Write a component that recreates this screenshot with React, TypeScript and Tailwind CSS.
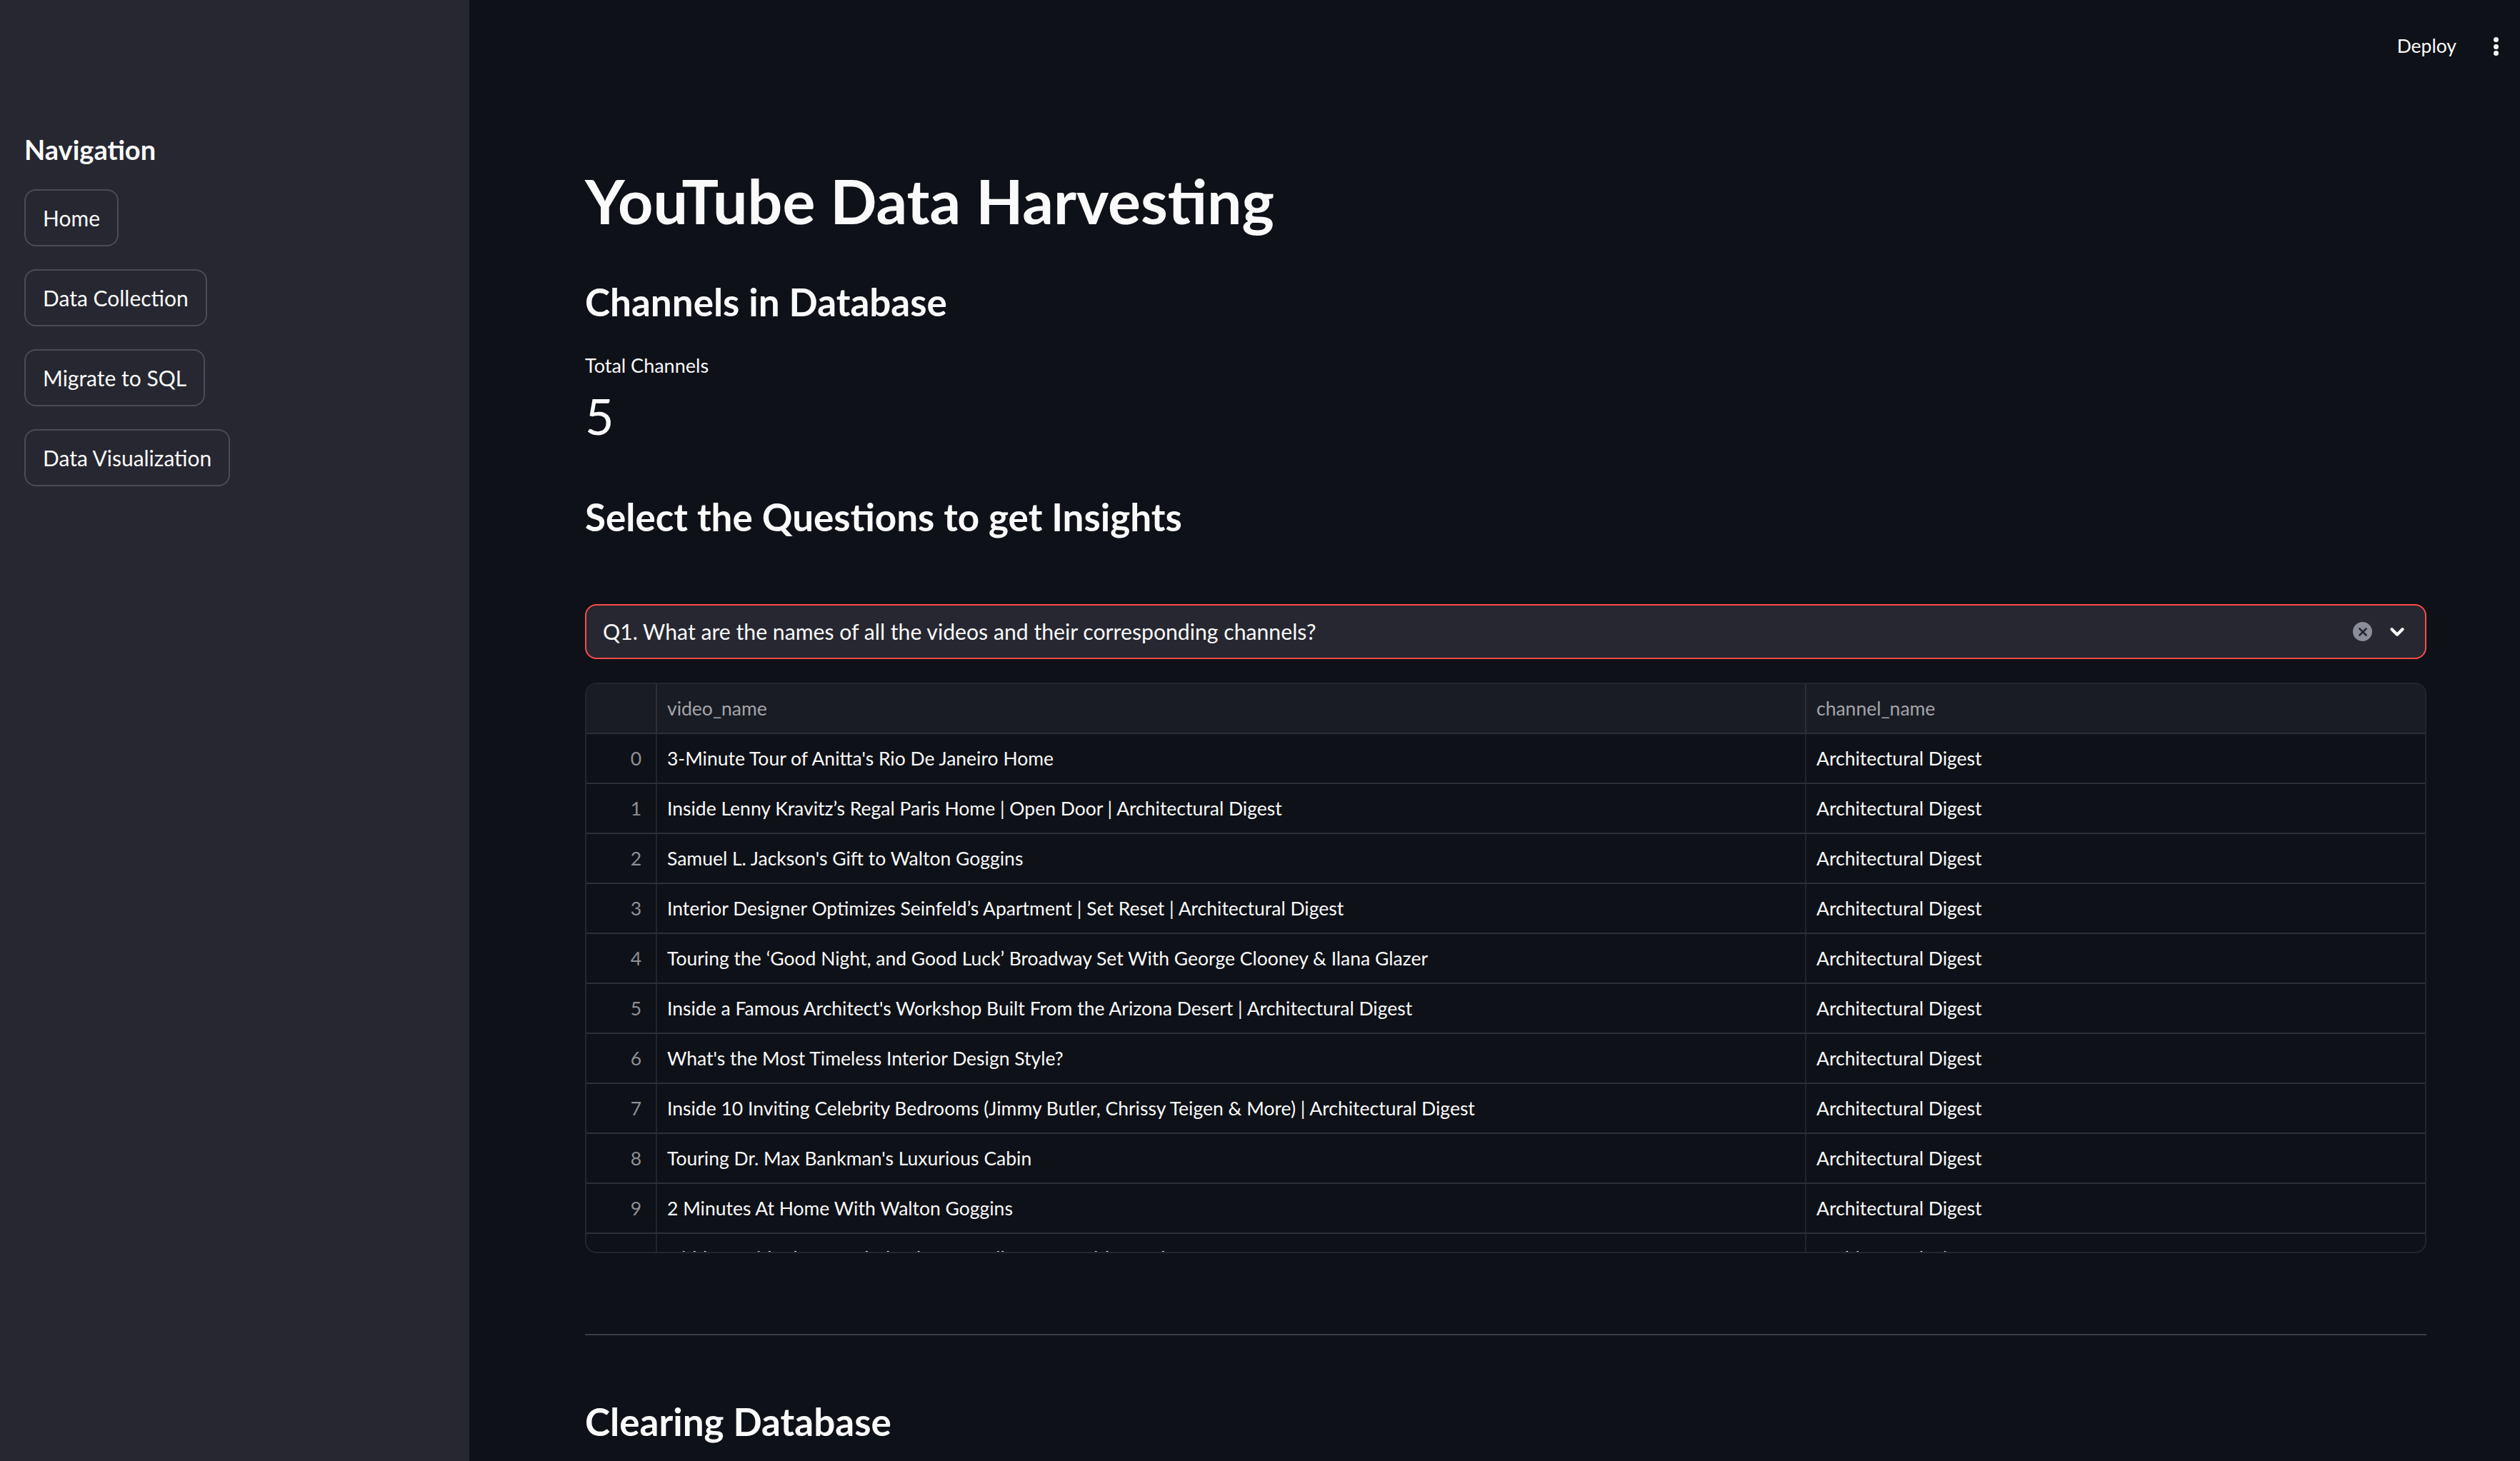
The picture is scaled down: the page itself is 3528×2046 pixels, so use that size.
import { ChevronDown, X } from "lucide-react";

const navItems = ["Home", "Data Collection", "Migrate to SQL", "Data Visualization"];

const rows = [
  "3-Minute Tour of Anitta's Rio De Janeiro Home",
  "Inside Lenny Kravitz’s Regal Paris Home | Open Door | Architectural Digest",
  "Samuel L. Jackson's Gift to Walton Goggins",
  "Interior Designer Optimizes Seinfeld’s Apartment | Set Reset | Architectural Digest",
  "Touring the ‘Good Night, and Good Luck’ Broadway Set With George Clooney & Ilana Glazer",
  "Inside a Famous Architect's Workshop Built From the Arizona Desert | Architectural Digest",
  "What's the Most Timeless Interior Design Style?",
  "Inside 10 Inviting Celebrity Bedrooms (Jimmy Butler, Chrissy Teigen & More) | Architectural Digest",
  "Touring Dr. Max Bankman's Luxurious Cabin",
  "2 Minutes At Home With Walton Goggins",
  "Hidden Inside the Wonderland of a Family Home With Jay Shetty",
];

function Sidebar() {
  return (
    <aside className="w-[657px] shrink-0 h-full bg-[#262730] px-[34px]">
      {/* Heading */}
      <div className="mt-[184px] h-[50px] leading-[50px] text-[38px] font-bold text-[#fafafa]">
        Navigation
      </div>

      {/* Nav buttons */}
      <div className="mt-[31px] flex flex-col items-start gap-[32px]">
        {navItems.map((item) => (
          <button
            key={item}
            className="h-[80px] px-[24px] rounded-[16px] border-2 border-[#4a4b54] bg-[#262730] text-[30px] text-[#fafafa] leading-none"
          >
            {item}
          </button>
        ))}
      </div>
    </aside>
  );
}

function QuestionSelect() {
  return (
    <div className="mt-[92px] h-[77px] rounded-[16px] border-2 border-[#ff4b4b] bg-[#262730] flex items-center pl-[23px] pr-[24px]">
      <span className="flex-1 text-[30.2px] text-[#fafafa] truncate">
        Q1. What are the names of all the videos and their corresponding channels?
      </span>
      <div className="flex items-center gap-[20px]">
        <span className="w-[27px] h-[27px] rounded-full bg-[#8b8d98] flex items-center justify-center">
          <X className="w-[18px] h-[18px] text-[#262730]" strokeWidth={3.5} />
        </span>
        <ChevronDown className="w-[30px] h-[30px] text-[#fafafa]" strokeWidth={3.5} />
      </div>
    </div>
  );
}

function DataTable() {
  return (
    <div className="mt-[33px] h-[799px] rounded-[16px] border-2 border-[#24262d] overflow-hidden">
      {/* Header */}
      <div className="flex h-[70px] bg-[#1a1c24] border-b-2 border-[#2c2f36] text-[26.5px] text-[#a3a5aa]">
        <div className="w-[99px] shrink-0 border-r-2 border-[#2c2f36]" />
        <div className="w-[1609px] shrink-0 border-r-2 border-[#2c2f36] flex items-center pl-[14px] pt-[2px]">video_name</div>
        <div className="flex-1 flex items-center pl-[14px] pt-[2px]">channel_name</div>
      </div>

      {/* Rows */}
      {rows.map((name, i) => (
        <div key={i} className="flex h-[70px] border-b-2 border-[#2c2f36] text-[26.5px] text-[#fafafa]">
          <div className="w-[99px] shrink-0 border-r-2 border-[#22242b] flex items-center justify-end pr-[20px] pt-[2px] text-[#8d8f94]">
            {i}
          </div>
          <div className="w-[1609px] shrink-0 border-r-2 border-[#22242b] flex items-center pl-[14px] pt-[2px] whitespace-nowrap">
            {name}
          </div>
          <div className="flex-1 flex items-center pl-[14px] pt-[2px]">Architectural Digest</div>
        </div>
      ))}
    </div>
  );
}

export default function App() {
  return (
    <div className="w-[3528px] h-[2046px] flex overflow-hidden bg-[#0e1117] font-[Lato,sans-serif]">
      <Sidebar />

      <main className="flex-1 h-full flex flex-col">
        {/* Toolbar */}
        <div className="h-[130px] shrink-0 flex items-center justify-end pr-[30px] gap-[52px]">
          <span className="text-[26.5px] text-[#fafafa]">Deploy</span>
          <div className="flex flex-col gap-[2.5px]">
            <span className="w-[7px] h-[7px] rounded-full bg-[#fafafa]" />
            <span className="w-[7px] h-[7px] rounded-full bg-[#fafafa]" />
            <span className="w-[7px] h-[7px] rounded-full bg-[#fafafa]" />
          </div>
        </div>

        {/* Content */}
        <div className="ml-[162px] w-[2578px]">
          <h1 className="mt-[101px] h-[100px] leading-[100px] text-[86px] font-bold text-[#fafafa]">
            YouTube Data Harvesting
          </h1>

          <h3 className="mt-[62px] h-[60px] leading-[60px] text-[53px] font-bold text-[#fafafa]">
            Channels in Database
          </h3>

          <div className="mt-[41px] h-[36px] leading-[36px] text-[27px] text-[#fafafa]">Total Channels</div>
          <div className="mt-[12px] h-[80px] leading-[80px] text-[70px] text-[#fafafa]">5</div>

          <h3 className="mt-[72px] h-[60px] leading-[60px] text-[53px] font-bold text-[#fafafa]">
            Select the Questions to get Insights
          </h3>

          <QuestionSelect />
          <DataTable />

          <hr className="mt-[113px] border-t-2 border-[#3a3c43]" />

          <h3 className="mt-[91px] h-[60px] leading-[60px] text-[53px] font-bold text-[#fafafa]">
            Clearing Database
          </h3>
        </div>
      </main>
    </div>
  );
}
